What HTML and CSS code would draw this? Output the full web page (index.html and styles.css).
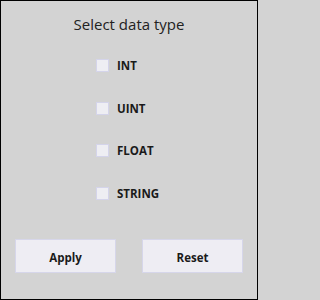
FILE: index.html
```html
<!DOCTYPE html>
<html>
<head>
<meta charset="utf-8">
<link rel="stylesheet" href="styles.css">
</head>
<body>
<div class="panel">
  <div class="title">Select data type</div>
  <div class="options">
    <label class="option"><span class="box"></span><span class="label">INT</span></label>
    <label class="option"><span class="box"></span><span class="label">UINT</span></label>
    <label class="option"><span class="box"></span><span class="label">FLOAT</span></label>
    <label class="option"><span class="box"></span><span class="label">STRING</span></label>
  </div>
  <div class="actions">
    <button class="btn">Apply</button>
    <button class="btn">Reset</button>
  </div>
</div>
</body>
</html>
```
FILE: styles.css
```css
html, body {
  margin: 0;
  padding: 0;
  background: #d3d3d3;
}
.panel {
  box-sizing: border-box;
  width: 258px;
  height: 300px;
  border: 1px solid #000;
  background: #d3d3d3;
  font-family: "Open Sans", "Noto Sans", sans-serif;
  color: #1a1a1a;
  display: flex;
  flex-direction: column;
}
.title {
  margin-top: 11px;
  height: 24px;
  line-height: 24px;
  text-align: center;
  font-size: 15px;
  color: #222;
}
.options {
  margin-top: 23px;
  margin-left: 95px;
  display: flex;
  flex-direction: column;
  gap: 29.6px;
}
.option {
  display: flex;
  align-items: center;
  height: 13px;
  gap: 8px;
}
.box {
  box-sizing: border-box;
  width: 13px;
  height: 13px;
  background: #eeeef3;
  border: 1px solid #d4d4ea;
}
.label {
  font-weight: bold;
  font-size: 11.5px;
  line-height: 13px;
  color: #1a1a1a;
}
.actions {
  margin-top: auto;
  margin-bottom: 26px;
  padding: 0 14px;
  display: flex;
  justify-content: space-between;
}
.btn {
  box-sizing: border-box;
  width: 101px;
  height: 34px;
  background: #eeedf3;
  border: 1px solid #d6d6ea;
  font-family: "Open Sans", "Noto Sans", sans-serif;
  font-weight: bold;
  font-size: 11.5px;
  color: #1a1a1a;
  padding: 2px 0 0 0;
}
```
